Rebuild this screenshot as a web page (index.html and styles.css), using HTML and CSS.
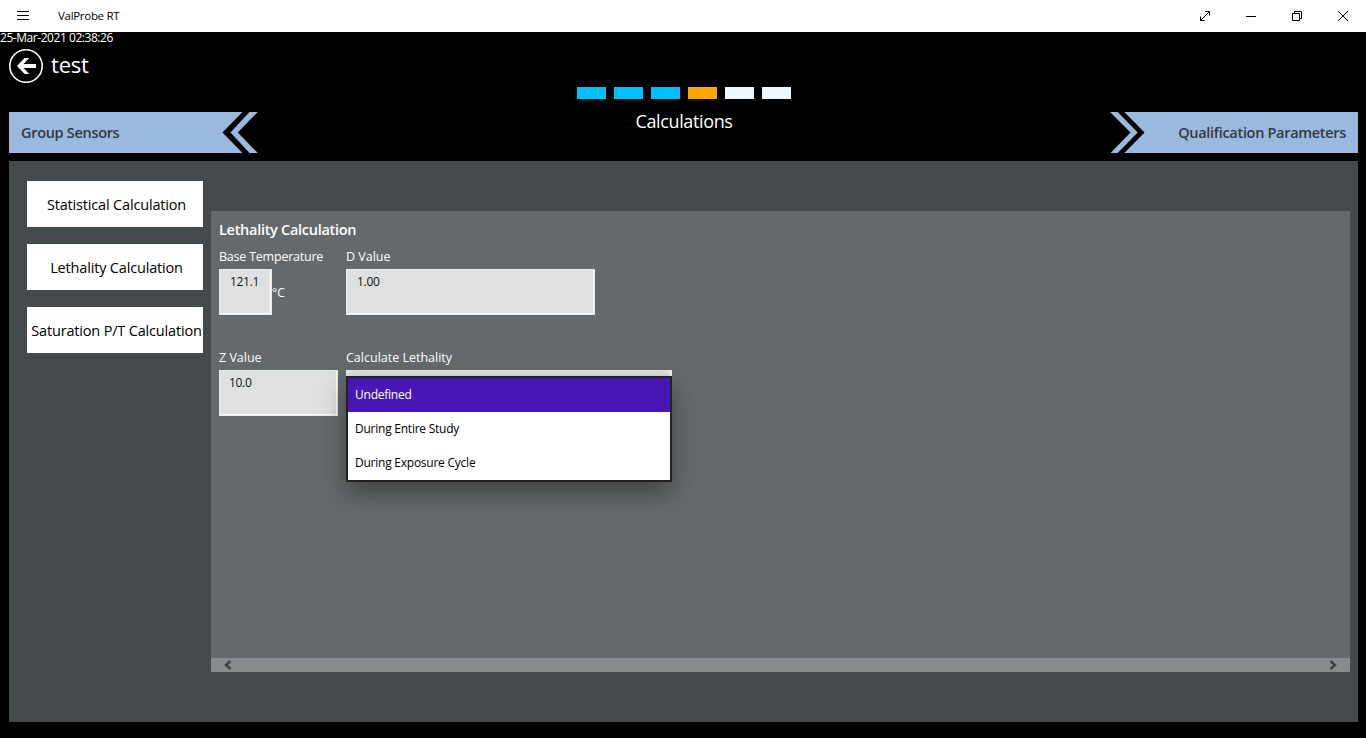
FILE: index.html
```html
<!DOCTYPE html>
<html lang="en">
<head>
<meta charset="utf-8">
<title>ValProbe RT</title>
<link rel="stylesheet" href="styles.css">
</head>
<body>
<div class="titlebar">
  <svg class="menu-icon" width="12" height="10" viewBox="0 0 12 10" shape-rendering="crispEdges"><path d="M0 .5h12M0 4.5h12M0 8.5h12" stroke="#000"/></svg>
  <span class="app-name">ValProbe RT</span>
  <div class="window-buttons">
    <svg width="46" height="32" viewBox="0 0 46 32" fill="none" stroke="#000"><path d="M18.5 20.5l9-9M23.5 11.5h4v4M18.5 16.5v4h4"/></svg>
    <svg width="46" height="32" viewBox="0 0 46 32" fill="none" stroke="#000"><path d="M18 16.5h10"/></svg>
    <svg width="46" height="32" viewBox="0 0 46 32" fill="none" stroke="#000"><path d="M18.500 13.500h7v7h-7zM20.500 13.500v-2h7v7h-2"/></svg>
    <svg width="46" height="32" viewBox="0 0 46 32" fill="none" stroke="#000"><path d="M18 11l10 10M28 11l-10 10"/></svg>
  </div>
</div>
<header class="header">
  <div class="clock">25-Mar-2021 02:38:26</div>
  <div class="back-row">
    <svg width="34" height="34" viewBox="0 0 34 34"><circle cx="17" cy="17" r="16.200" fill="none" stroke="#fff" stroke-width="1.600"/><path d="M8 17l7.600-8h4.600l-5.600 6H27v4H14.600l5.600 6h-4.600z" fill="#fff"/></svg>
    <h1 class="study-name">test</h1>
  </div>
  <div class="steps">
    <i class="step done"></i><i class="step done"></i><i class="step done"></i><i class="step current"></i><i class="step"></i><i class="step"></i>
  </div>
  <nav class="nav">
    <div class="nav-tab">
      <div class="nav-label">Group Sensors</div>
      <svg width="36" height="41" viewBox="0 0 36 41" fill="#9ab9dd"><path d="M0 0h20.500L.5 20.500l20 20.500H0zM27.500 0h8.300l-20 20.500 20 20.500h-8.300l-19-20.500z"/></svg>
    </div>
    <h2 class="page-title">Calculations</h2>
    <div class="nav-tab nav-next">
      <svg width="35" height="41" viewBox="0 0 35 41" fill="#9ab9dd"><path d="M35 0H14.300l20.200 20.500L14.300 41H35zM0 0h7.700l20 20.500L7.700 41H.5l20-20.500z"/></svg>
      <div class="nav-label">Qualification Parameters</div>
    </div>
  </nav>
</header>
<main class="main">
  <aside class="sidebar">
    <button class="side-button">Statistical Calculation</button>
    <button class="side-button">Lethality Calculation</button>
    <button class="side-button">Saturation P/T Calculation</button>
  </aside>
  <section class="panel">
    <div class="form">
      <h3 class="form-title">Lethality Calculation</h3>
      <div class="form-grid">
        <div class="field">
          <label class="base">Base Temperature</label>
          <div class="input-row"><div class="input temp">121.1</div><span class="unit">°C</span></div>
        </div>
        <div class="field">
          <label>D Value</label>
          <div class="input d-value">1.00</div>
        </div>
        <div class="field">
          <label>Z Value</label>
          <div class="input z-value">10.0</div>
        </div>
        <div class="field combo">
          <label>Calculate Lethality</label>
          <div class="input select"></div>
          <ul class="options">
            <li class="selected">Undefined</li>
            <li>During Entire Study</li>
            <li>During Exposure Cycle</li>
          </ul>
        </div>
      </div>
    </div>
    <div class="scrollbar">
      <svg width="8" height="10" viewBox="0 0 8 10"><path d="M6.500 1L2 5l4.500 4" fill="none" stroke="#3c3f41" stroke-width="2.400"/></svg>
      <svg width="8" height="10" viewBox="0 0 8 10"><path d="M1.500 1L6 5 1.500 9" fill="none" stroke="#3c3f41" stroke-width="2.400"/></svg>
    </div>
  </section>
</main>
</body>
</html>
```
FILE: styles.css
```css
* { box-sizing: border-box; }
body {
  margin: 0;
  height: 738px;
  overflow: hidden;
  background: #000;
  color: #fff;
  font-family: "Open Sans", "Noto Sans", sans-serif;
  font-size: 12px;
  white-space: nowrap;
}
h1, h2, h3, ul { margin: 0; padding: 0; font-weight: 400; list-style: none; }
svg { display: block; flex: none; }

.titlebar { display: flex; align-items: center; height: 32px; padding-left: 17px; background: #fff; color: #000; }
.app-name { margin-left: 29px; padding-bottom: 2px; font-size: 11.5px; letter-spacing: -0.3px; }
.window-buttons { display: flex; margin-left: auto; }

.header { height: 129px; padding: 0 8px 0 9px; }
.clock { height: 17px; margin-left: -9px; line-height: 12px; letter-spacing: -0.45px; }
.back-row { display: flex; align-items: center; gap: 8px; height: 34px; }
.study-name { padding-bottom: 4px; font-size: 22px; line-height: 30px; letter-spacing: -0.2px; }
.steps { display: flex; gap: 8px; margin: 4px 0 13px 568px; }
.step { width: 29px; height: 12px; background: #f0f8ff; }
.step.done { background: #00bfff; }
.step.current { background: #ffa500; }

.nav { display: flex; justify-content: space-between; height: 41px; }
.nav-tab { display: flex; width: 249px; color: #2f3a42; font-size: 14.5px; font-weight: 600; line-height: 41px; letter-spacing: -0.31px; }
.nav-label { flex: 1; padding-left: 12px; background: #9ab9dd; }
.nav-tab.nav-next { width: 248px; }
.nav-next .nav-label { padding: 0 12px 0 0; text-align: right; }
.page-title { font-size: 18px; line-height: 18px; letter-spacing: -0.36px; }

.main { display: flex; gap: 8px; height: 561px; margin: 0 8px 0 9px; padding: 20px 8px 0 18px; background: #44494b; }
.sidebar { display: flex; flex-direction: column; gap: 17px; width: 176px; }
.side-button { height: 46px; padding: 2px 0 0 3px; border: 0; background: #fff; color: #000; font: 14.5px/44px "Open Sans", "Noto Sans", sans-serif; letter-spacing: -0.17px; white-space: nowrap; }
.panel { flex: 1; display: flex; flex-direction: column; height: 461px; margin-top: 30px; background: #65696c; }
.form { flex: 1; padding: 8px; }
.form-title { font-size: 14.5px; font-weight: 600; line-height: 22px; letter-spacing: -0.29px; }
.form-grid { display: grid; grid-template-columns: 119px 326px; column-gap: 8px; row-gap: 34px; padding-top: 7px; }
.field label { display: block; height: 21px; line-height: 18px; font-size: 12.5px; }
.field .base { letter-spacing: -0.22px; }
.input-row { display: flex; }
.input { height: 46px; padding: 3px 11px; border: 1px solid #e8ebe9; box-shadow: inset -1px -1px #f8faf9; background: #dfe1e0; color: #111; font-size: 12px; line-height: 18px; letter-spacing: -0.3px; }
.input.temp { width: 53px; padding-left: 10px; }
.input.d-value { width: 249px; padding-left: 10px; }
.input.z-value { padding-left: 9px; }
.unit { padding-top: 15px; line-height: 18px; }
.combo { position: relative; }
.options { position: absolute; left: 0; top: 27px; width: 326px; height: 106px; border: 2px solid #222; background: #fff; color: #000; box-shadow: 0 11px 22px rgba(34, 34, 24, .5); }
.options li { height: 34px; padding-left: 7px; line-height: 34px; letter-spacing: -0.24px; }
.options li.selected { background: #4617b4; color: #fff; }
.scrollbar { display: flex; align-items: center; justify-content: space-between; height: 14px; padding: 0 13px; background: #898c8d; }
```
